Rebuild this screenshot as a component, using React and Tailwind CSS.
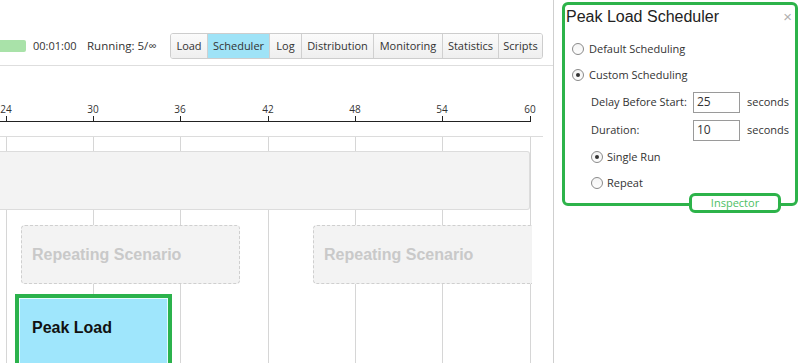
import React from "react";

const ticks = [
  { x: 6, l: "24" },
  { x: 93, l: "30" },
  { x: 180, l: "36" },
  { x: 268, l: "42" },
  { x: 355, l: "48" },
  { x: 442, l: "54" },
  { x: 530, l: "60" },
];

const tabs = [
  { t: "Load", w: 37 },
  { t: "Scheduler", w: 62, active: true },
  { t: "Log", w: 32 },
  { t: "Distribution", w: 72 },
  { t: "Monitoring", w: 69 },
  { t: "Statistics", w: 56 },
  { t: "Scripts", w: 44 },
];

const ui = { fontFamily: '"Open Sans", "Noto Sans", sans-serif' };
const arial = { fontFamily: '"Liberation Sans", Arial, sans-serif' };

function Radio({ checked }) {
  return (
    <span className="flex h-[12px] w-[12px] shrink-0 items-center justify-center rounded-full border border-[#8a8a8a] bg-gradient-to-b from-[#f4f4f4] to-[#fdfdfd]">
      {checked && <span className="h-[4px] w-[4px] rounded-full bg-[#333]" />}
    </span>
  );
}

export default function App() {
  return (
    <div className="flex h-[363px] w-[800px] overflow-hidden bg-white text-[#333]" style={ui}>
      {/* Left */}
      <div className="flex w-[554px] shrink-0 flex-col border-r border-[#cfcfcf]">
        {/* toolbar */}
        <div className="flex h-[66px] shrink-0 items-start border-b border-[#dedede] pt-[33px] text-[11px]">
          <div className="flex h-[26px] items-center">
            <div className="h-[12px] w-[26px] rounded-r-[2px] bg-[#a9e2a9]" />
            <span className="ml-[7px] w-[47px]">00:01:00</span>
            <span className="ml-[7px] w-[76px] text-[11.5px]">Running: 5/∞</span>
          </div>
          <div className="ml-[7px] flex h-[26px] overflow-hidden rounded-[3px] border border-[#cdcdcd]">
            {tabs.map((t, i) => (
              <div
                key={t.t}
                className={
                  "flex items-center justify-center " +
                  (i > 0 ? "border-l border-[#d0d0d0] " : "") +
                  (t.active ? "bg-[#9fe3f7]" : "bg-gradient-to-b from-[#fbfbfb] to-[#efefef]")
                }
                style={{ width: t.w - (i === 0 ? 1 : 0) }}
              >
                {t.t}
              </div>
            ))}
          </div>
        </div>
        {/* ruler */}
        <div className="relative mr-[10px] h-[71px] shrink-0 border-b border-[#dcdcdc]">
          {ticks.map((t) => (
            <div key={t.l} className="absolute top-[36px] flex w-[20px] -translate-x-1/2 flex-col items-center" style={{ left: t.x }}>
              <span className="text-[10px] leading-[14px] text-[#333]">{t.l}</span>
              <span className="h-[6px] w-px bg-[#222]" />
            </div>
          ))}
          <div className="absolute left-0 top-[55px] h-px w-[531px] bg-[#222]" />
        </div>
        {/* timeline */}
        <div className="relative flex-1 overflow-hidden">
          {ticks.map((t) => (
            <div key={t.l} className="absolute top-0 bottom-0 w-px bg-[#d6d6d6]" style={{ left: t.x }} />
          ))}
          <div className="relative flex flex-col">
            <div className="mt-[14px] h-[59px] w-[530px] rounded-r-[3px] border border-l-0 border-[#dcdcdc] bg-[#f3f3f3]" />
            <div className="mt-[15px] flex gap-[73px] pl-[21px]" style={arial}>
              <div className="flex h-[59px] w-[219px] items-center rounded-[4px] border border-dashed border-[#cfcfcf] bg-[#f3f3f3] pl-[10px] text-[16px] font-bold text-[#c9c9c9]">
                Repeating Scenario
              </div>
              <div className="flex h-[59px] w-[219px] items-center rounded-l-[4px] border border-r-0 border-dashed border-[#cfcfcf] bg-[#f3f3f3] pl-[10px] text-[16px] font-bold text-[#c9c9c9]">
                Repeating Scenario
              </div>
            </div>
            <div className="ml-[15px] mt-[10px] h-[76px] w-[157px] border-[4px] border-[#2bb24c] bg-[#2bb24c]">
              <div className="flex h-full w-full items-center border border-[#e8fbff] bg-[#9fe6fc] pl-[12px] text-[16px] font-bold text-[#111]" style={arial}>
                <span className="-mt-[8px]">Peak Load</span>
              </div>
            </div>
          </div>
        </div>
      </div>
      {/* Right */}
      <div className="flex-1">
        <div className="relative ml-[8px] mt-[2px] h-[204px] w-[236px] rounded-[6px] border-[3px] border-[#2db34a] bg-white">
          <div className="flex h-[31px] items-start justify-between pl-[1px] pr-[3px] pt-[2px]">
            <span className="text-[16px] leading-[20px] text-[#222]" style={arial}>Peak Load Scheduler</span>
            <span className="mt-[2px] text-[15px] leading-[15px] text-[#b0b0b0]" style={arial}>×</span>
          </div>
          <div className="flex flex-col text-[11px]">
            <div className="flex h-[26px] items-center gap-[5px] pl-[7px]">
              <Radio />
              <span>Default Scheduling</span>
            </div>
            <div className="flex h-[26px] items-center gap-[5px] pl-[7px]">
              <Radio checked />
              <span>Custom Scheduling</span>
            </div>
            <div className="flex h-[28px] items-center pl-[26px]">
              <span className="w-[102px]">Delay Before Start:</span>
              <div className="flex h-[21px] w-[47px] items-center border border-[#9a9a9a] pl-[3px] text-[12px]">25</div>
              <span className="ml-[7px]">seconds</span>
            </div>
            <div className="flex h-[28px] items-center pl-[26px]">
              <span className="w-[102px]">Duration:</span>
              <div className="flex h-[21px] w-[47px] items-center border border-[#9a9a9a] pl-[3px] text-[12px]">10</div>
              <span className="ml-[7px]">seconds</span>
            </div>
            <div className="flex h-[26px] items-center gap-[4px] pl-[26px]">
              <Radio checked />
              <span>Single Run</span>
            </div>
            <div className="flex h-[26px] items-center gap-[4px] pl-[26px]">
              <Radio />
              <span>Repeat</span>
            </div>
          </div>
          <div className="absolute left-[124px] top-[188px] flex h-[20px] w-[92px] items-center justify-center rounded-[6px] border-[3px] border-[#2db34a] bg-white text-[11px] text-[#4dc063]">
            Inspector
          </div>
        </div>
      </div>
    </div>
  );
}
